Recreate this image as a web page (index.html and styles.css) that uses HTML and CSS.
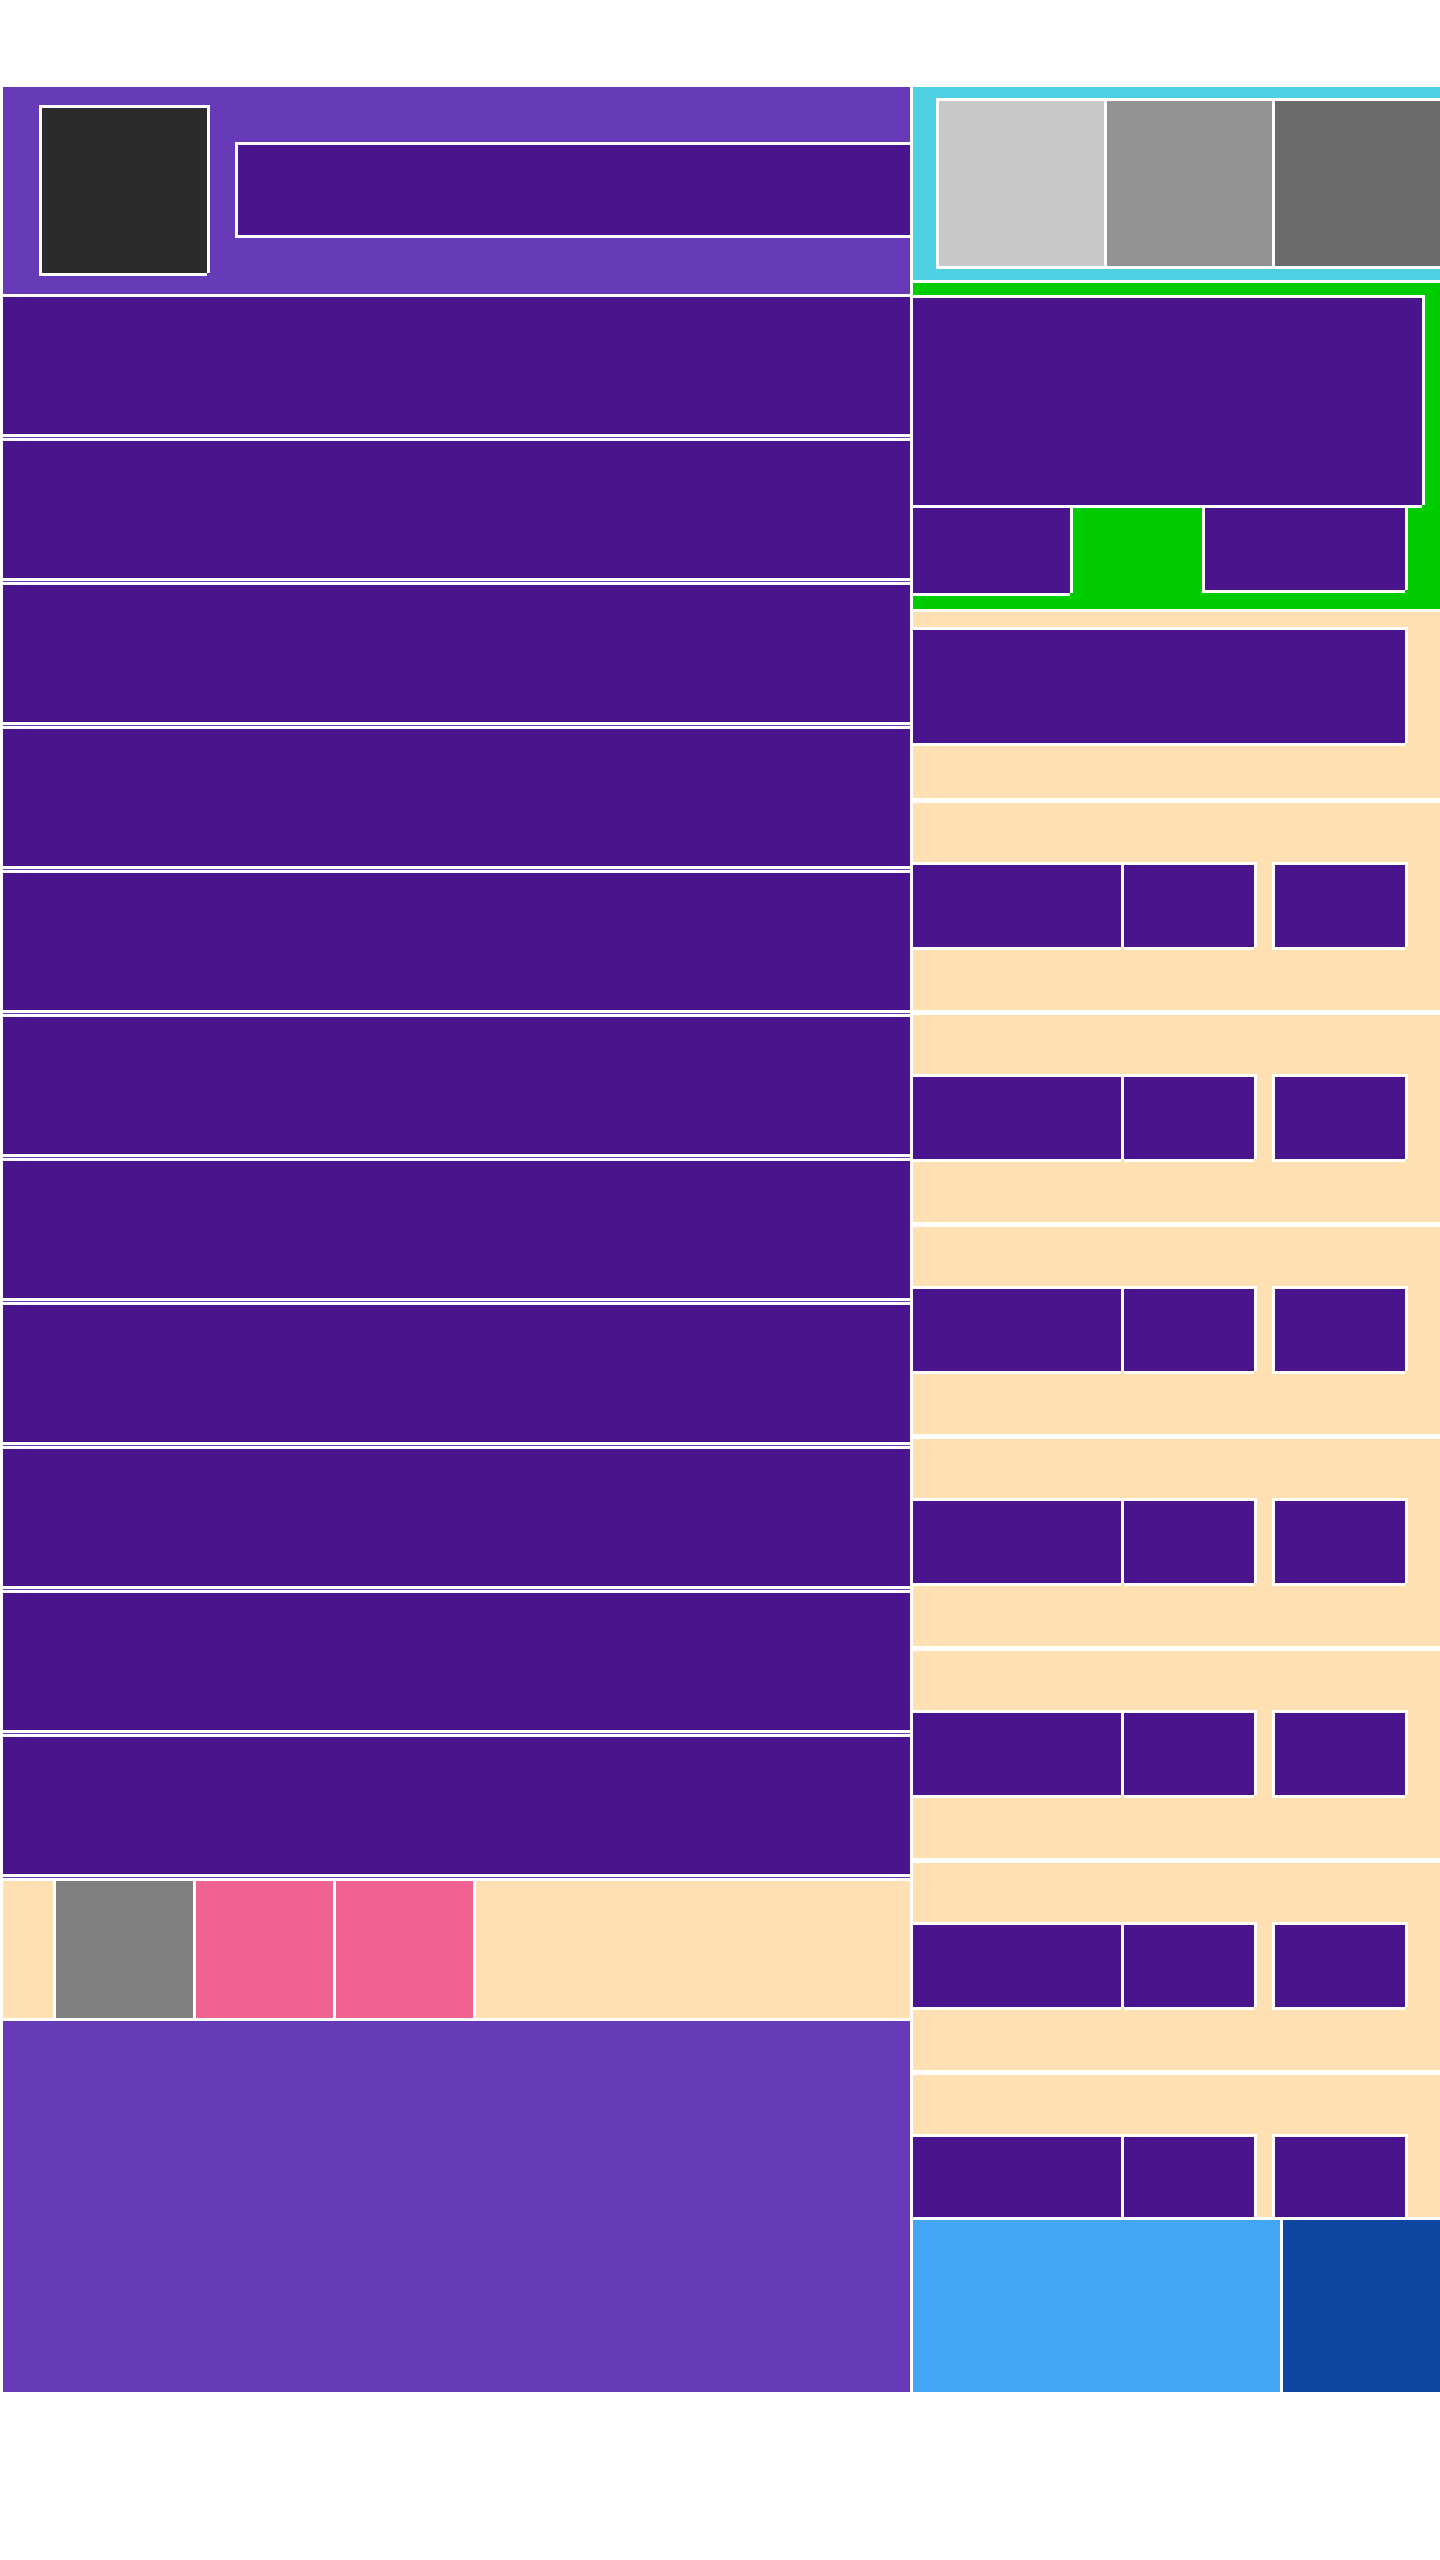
FILE: index.html
```html
<!DOCTYPE html>
<html lang="en">
<head>
  <meta charset="UTF-8" />
  <meta name="viewport" content="width=device-width, initial-scale=1.0" />
  <title>Board</title>
  <link rel="stylesheet" href="styles.css">
</head>
<body>
  <div class="page">
    <div class="left">
      <div class="header">
        <div class="avatar"></div>
        <div class="search"></div>
      </div>
      <!-- 11 list rows -->
      <div class="row"></div>
      <div class="row"></div>
      <div class="row"></div>
      <div class="row"></div>
      <div class="row"></div>
      <div class="row"></div>
      <div class="row"></div>
      <div class="row"></div>
      <div class="row"></div>
      <div class="row"></div>
      <div class="row"></div>
      <div class="tile-row">
        <div class="tiles">
          <div class="tile gray"></div>
          <div class="tile pink"></div>
          <div class="tile pink"></div>
        </div>
      </div>
      <div class="footer"></div>
    </div>

    <div class="right">
      <div class="gallery-wrap">
        <div class="gallery">
          <div class="shot light"></div>
          <div class="shot mid"></div>
          <div class="shot dark"></div>
        </div>
      </div>

      <div class="feature">
        <div class="feature-main"></div>
        <div class="feature-sub">
          <div class="sub-a"></div>
          <div class="sub-b"></div>
        </div>
      </div>

      <div class="list">
        <div class="list-top">
          <div class="wide-box"></div>
        </div>
        <div class="list-row"><div class="box a"></div><div class="box b"></div><div class="box c"></div></div>
        <div class="list-row"><div class="box a"></div><div class="box b"></div><div class="box c"></div></div>
        <div class="list-row"><div class="box a"></div><div class="box b"></div><div class="box c"></div></div>
        <div class="list-row"><div class="box a"></div><div class="box b"></div><div class="box c"></div></div>
        <div class="list-row"><div class="box a"></div><div class="box b"></div><div class="box c"></div></div>
        <div class="list-row"><div class="box a"></div><div class="box b"></div><div class="box c"></div></div>
        <div class="list-row"><div class="box a"></div><div class="box b"></div><div class="box c"></div></div>
      </div>

      <div class="actions">
        <div class="act-primary"></div>
        <div class="act-secondary"></div>
      </div>
    </div>
  </div>
</body>
</html>
```

FILE: styles.css
```css
* {
  box-sizing: border-box;
}
html, body {
  margin: 0;
  background: #fff;
  font-family: "Liberation Sans", Arial, sans-serif;
  overflow: hidden;
}
.page {
  display: flex;
  gap: 3px;
  width: 1440px;
  padding: 87px 0 0 3px;
}

/* boxes: white edge on top/left as border, on right/bottom as shadow */
.avatar,
.search,
.feature-main,
.sub-a,
.sub-b,
.wide-box,
.box {
  background: #4a148c;
  box-shadow: 3px 0 0 #fff, 0 3px 0 #fff;
}

/* left column */
.left {
  width: 907px;
  flex-shrink: 0;
  display: flex;
  flex-direction: column;
  background: #673ab7;
}
.header {
  display: flex;
  align-items: flex-start;
  height: 207px;
  padding: 18px 0 0 36px;
  background: #673ab7;
}
.avatar {
  width: 168px;
  height: 168px;
  flex-shrink: 0;
  background: #2b2b2b;
  border-top: 3px solid #fff;
  border-left: 3px solid #fff;
}
.search {
  flex: 1;
  height: 93px;
  margin: 37px 0 0 28px;
  border-top: 3px solid #fff;
  border-left: 3px solid #fff;
}
.row {
  height: 143px;
  margin-bottom: 1px;
  background: #4a148c;
  border-top: 3px solid #fff;
  border-bottom: 3px solid #fff;
}
.tile-row {
  height: 143px;
  padding-left: 50px;
  background: #ffe0b2;
  border-top: 3px solid #fff;
  border-bottom: 3px solid #fff;
  display: flex;
}
.tiles {
  display: flex;
  gap: 3px;
  padding: 0 3px;
  background: #fff;
}
.tile {
  width: 137px;
  height: 137px;
}
.gray { background: #808080; }
.pink { background: #f06292; }
.footer {
  height: 371px;
  background: #673ab7;
}

/* right column */
.right {
  width: 527px;
  flex-shrink: 0;
  overflow: hidden;
  display: flex;
  flex-direction: column;
  gap: 3px;
}
.gallery-wrap {
  height: 193px;
  padding: 11px 0 0 23px;
  background: #4dd0e1;
}
.gallery {
  display: flex;
  gap: 3px;
  width: 507px;
  padding: 3px;
  background: #fff;
}
.shot {
  width: 165px;
  height: 165px;
  flex-shrink: 0;
}
.shot.light { background: #c8c8c8; }
.shot.mid { background: #939393; }
.shot.dark { background: #6b6b6b; }

.feature {
  height: 326px;
  padding-top: 12px;
  background: #00cc00;
}
.feature-main {
  width: 509px;
  height: 210px;
  margin-bottom: 3px;
  border-top: 3px solid #fff;
}
.feature-sub {
  display: flex;
  align-items: flex-start;
}
.sub-a {
  width: 157px;
  height: 85px;
}
.sub-b {
  width: 203px;
  height: 82px;
  margin-left: 132px;
  border-left: 3px solid #fff;
}

.list {
  height: 1605px;
  overflow: hidden;
  display: flex;
  flex-direction: column;
  gap: 5px;
  background: #fff;
}
.list-top {
  height: 186px;
  flex-shrink: 0;
  padding-top: 15px;
  background: #ffe0b2;
}
.wide-box {
  width: 492px;
  height: 116px;
  border-top: 3px solid #fff;
}
.list-row {
  height: 207px;
  flex-shrink: 0;
  display: flex;
  align-items: flex-start;
  padding-top: 59px;
  background: #ffe0b2;
}
.box {
  height: 85px;
  border-top: 3px solid #fff;
}
.box.a { width: 208px; }
.box.b {
  width: 130px;
  margin-left: 3px;
}
.box.c {
  width: 133px;
  margin-left: 18px;
  border-left: 3px solid #fff;
}

.actions {
  display: flex;
  gap: 3px;
  height: 172px;
}
.act-primary {
  width: 367px;
  background: #42a5f5;
}
.act-secondary {
  flex: 1;
  background: #0d47a1;
}
```
